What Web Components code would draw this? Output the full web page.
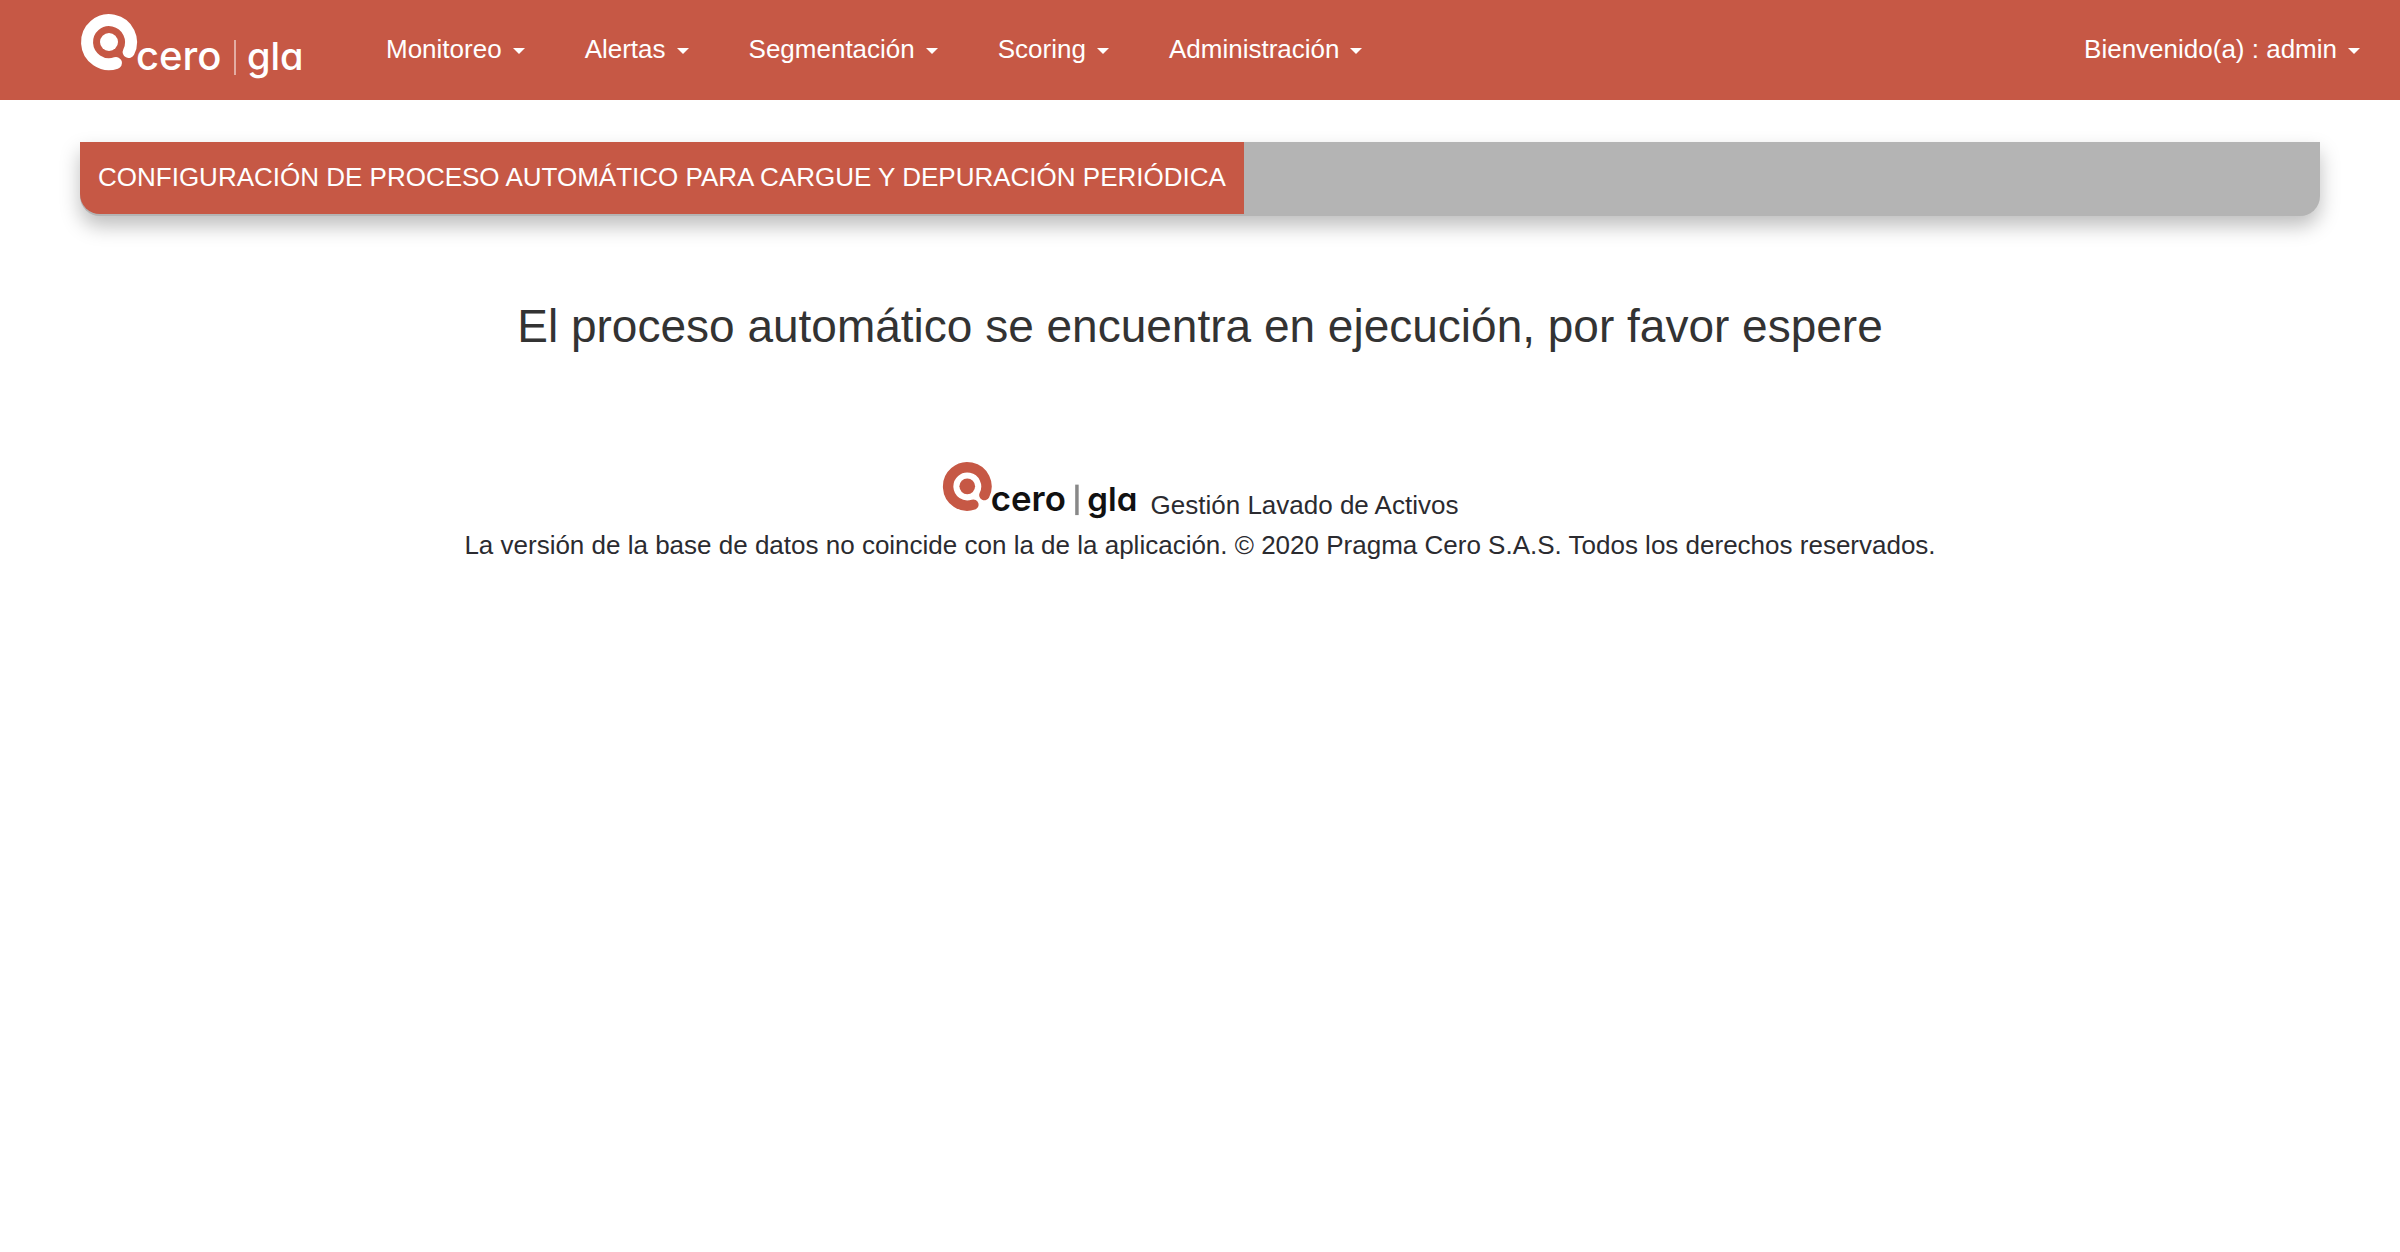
<!DOCTYPE html>
<html lang="es">
<head>
<meta charset="utf-8">
<title>Cero | gla</title>
<style>
  body { margin: 0; background: #fff; color: #2b2b30; font: 26px/40px "Liberation Sans", Arial, sans-serif; --brand: #c65845; }
</style>
</head>
<body>
<app-shell>
  <top-bar slot="header">
    <nav-menu>Monitoreo</nav-menu>
    <nav-menu>Alertas</nav-menu>
    <nav-menu>Segmentación</nav-menu>
    <nav-menu>Scoring</nav-menu>
    <nav-menu>Administración</nav-menu>
    <nav-menu slot="user">Bienvenido(a) : admin</nav-menu>
  </top-bar>
  <title-strip>CONFIGURACIÓN DE PROCESO AUTOMÁTICO PARA CARGUE Y DEPURACIÓN PERIÓDICA</title-strip>
  <status-message>El proceso automático se encuentra en ejecución, por favor espere</status-message>
  <page-footer slot="footer">
    <span slot="product">Gestión Lavado de Activos</span>
    La versión de la base de datos no coincide con la de la aplicación. © 2020 Pragma Cero S.A.S. Todos los derechos reservados.
  </page-footer>
</app-shell>
<script>
  const define = (name, html) => {
    const template = document.createElement('template');
    template.innerHTML = html;
    customElements.define(name, class extends HTMLElement {
      constructor() {
        super();
        this.attachShadow({ mode: 'open' }).append(template.content.cloneNode(true));
      }
    });
  };

  define('brand-logo', `
    <style>
      :host { display: block; flex: none; width: 224px; }
      svg { display: block; width: 100%; height: auto; overflow: visible; }
      .ring { fill: none; stroke: var(--logo-mark, #fff); stroke-width: 12; stroke-linecap: round; }
      .dot { fill: var(--logo-mark, #fff); }
      text { fill: var(--logo-text, #fff); font: var(--logo-weight, 500) 38px Inter, "Liberation Sans", sans-serif; font-feature-settings: "cv11"; }
      .name { font-size: 40px; }
      .divider { stroke: var(--logo-divider, #e3aca2); stroke-width: var(--logo-divider-width, 2); }
    </style>
    <svg viewBox="0 2 224 72" role="img" aria-label="cero gla">
      <path class="ring" d="M48.7 40 A22 22 0 1 0 36 51"/>
      <circle class="dot" cx="29" cy="30" r="9"/>
      <text class="name" x="56" y="58">cero</text>
      <path class="divider" d="M155 28V63"/>
      <text x="167" y="58">gla</text>
    </svg>`);

  define('nav-menu', `
    <style>
      :host { display: block; }
      button { display: flex; align-items: center; gap: 11px; height: 100px; padding: 0 30px 2px; border: 0; background: none; color: #fff; font: inherit; white-space: nowrap; cursor: pointer; }
      i { border: 6px solid transparent; border-top-color: currentColor; border-bottom: 0; margin-top: 4px; }
    </style>
    <button type="button" aria-haspopup="true"><span><slot></slot></span><i></i></button>`);

  define('top-bar', `
    <style>
      :host { display: block; background: var(--brand); }
      header { display: flex; align-items: center; padding: 0 10px 0 80px; }
      a { display: block; margin-right: 52px; }
      nav { display: flex; flex: 1; }
    </style>
    <header>
      <a href="#"><brand-logo></brand-logo></a>
      <nav><slot></slot></nav>
      <slot name="user"></slot>
    </header>`);

  define('title-strip', `
    <style>
      :host { display: flex; padding-bottom: 2px; background: #b4b4b4; border-radius: 0 0 20px 20px; box-shadow: 0 10px 20px rgba(0, 0, 0, .26); }
      h1 { margin: 0; padding: 15px 18px 17px; background: var(--brand); border-bottom-left-radius: 20px; color: #fff; font: inherit; }
    </style>
    <h1><slot></slot></h1>`);

  define('status-message', `
    <style>
      :host { display: block; margin-top: 85px; text-align: center; color: #333; }
      h2 { margin: 0; font-size: 46px; line-height: 50px; font-weight: 400; }
    </style>
    <h2 role="status"><slot></slot></h2>`);

  define('page-footer', `
    <style>
      :host { display: block; text-align: center; --logo-mark: #c65845; --logo-text: #111; --logo-weight: 600; --logo-divider: #888; --logo-divider-width: 4; }
      div { display: flex; justify-content: center; align-items: flex-end; gap: 14px; }
      brand-logo { width: 195px; }
      p { margin: 0; }
    </style>
    <div><brand-logo></brand-logo><slot name="product"></slot></div>
    <p><slot></slot></p>`);

  define('app-shell', `
    <style>
      :host { display: block; }
      main { padding: 42px 80px 0; }
      footer { padding: 111px 80px 40px; }
    </style>
    <slot name="header"></slot>
    <main><slot></slot></main>
    <footer><slot name="footer"></slot></footer>`);
</script>
</body>
</html>
